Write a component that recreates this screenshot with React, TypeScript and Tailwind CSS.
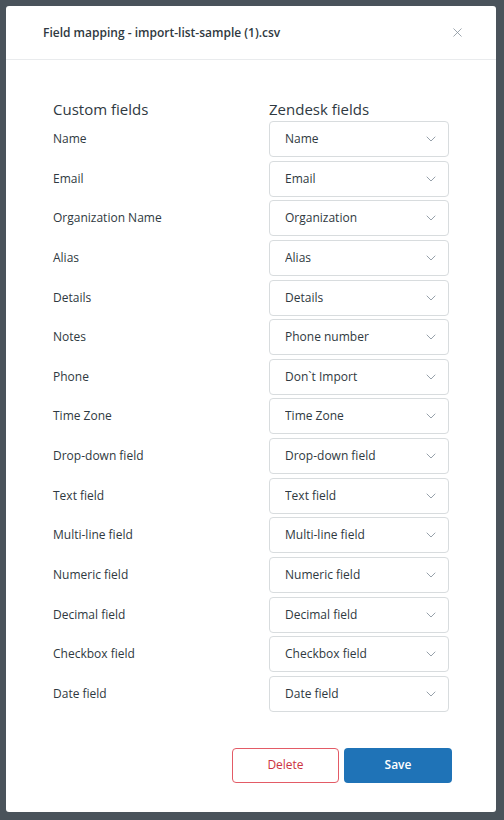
import { ChevronDown, X } from "lucide-react";
import React from "react";

const ROWS: [string, string][] = [
  ["Name", "Name"],
  ["Email", "Email"],
  ["Organization Name", "Organization"],
  ["Alias", "Alias"],
  ["Details", "Details"],
  ["Notes", "Phone number"],
  ["Phone", "Don`t Import"],
  ["Time Zone", "Time Zone"],
  ["Drop-down field", "Drop-down field"],
  ["Text field", "Text field"],
  ["Multi-line field", "Multi-line field"],
  ["Numeric field", "Numeric field"],
  ["Decimal field", "Decimal field"],
  ["Checkbox field", "Checkbox field"],
  ["Date field", "Date field"],
];

export default function App() {
  const [values, setValues] = React.useState(ROWS.map((r) => r[1]));

  return (
    <div
      className="flex min-h-[820px] w-full bg-[#4a535b] p-[6px] pr-[8px] text-[#2f3941]"
      style={{ fontFamily: '"Open Sans", "Noto Sans", sans-serif' }}
    >
      <div className="flex h-[806px] w-[490px] flex-col rounded-[3px] bg-white">
        <div className="flex h-[54px] items-center justify-between border-b border-[#e9ebed] pl-[37px] pr-[31px]">
          <h1 className="text-[12px] font-semibold text-[#2f3941]">
            Field mapping - import-list-sample (1).csv
          </h1>
          <button type="button" className="text-[#87929d]">
            <X className="h-[15px] w-[15px]" strokeWidth={1.3} />
          </button>
        </div>

        <div className="flex flex-1 flex-col pl-[47px] pr-[46px] pt-[39px]">
          <div className="grid grid-cols-[216px_180px] items-center">
            <h2 className="h-[22px] text-[15px] leading-[20px] text-[#2f3941]">
              Custom fields
            </h2>
            <h2 className="h-[22px] text-[15px] leading-[20px] text-[#2f3941]">
              Zendesk fields
            </h2>
          </div>

          <div className="flex flex-col gap-[3.65px]">
            {ROWS.map(([label], i) => (
              <div
                key={label}
                className="grid grid-cols-[216px_180px] items-center"
              >
                <span className="text-[12px] text-[#2f3941]">{label}</span>
                <div className="relative">
                  <select
                    value={values[i]}
                    onChange={(e) =>
                      setValues((prev) =>
                        prev.map((v, j) => (j === i ? e.target.value : v)),
                      )
                    }
                    className="h-[36px] w-full appearance-none rounded-[4px] border border-[#d8dcde] bg-white pl-[15px] pr-8 text-[12px] text-[#2f3941] outline-none"
                  >
                    {Array.from(new Set(ROWS.map((r) => r[1]))).map((o) => (
                      <option key={o} value={o}>
                        {o}
                      </option>
                    ))}
                  </select>
                  <ChevronDown
                    className="pointer-events-none absolute right-[10px] top-1/2 h-4 w-4 -translate-y-1/2 text-[#87929d]"
                    strokeWidth={1.3}
                  />
                </div>
              </div>
            ))}
          </div>

          <div className="-mr-[2px] mt-[36px] flex justify-end gap-[5px]">
            <button
              type="button"
              className="h-[35px] w-[107px] rounded-[4px] border border-[#e35b66] bg-white text-[12px] text-[#cc3340]"
            >
              Delete
            </button>
            <button
              type="button"
              className="h-[35px] w-[108px] rounded-[4px] bg-[#1f73b7] text-[12px] font-semibold text-white"
            >
              Save
            </button>
          </div>
        </div>
      </div>
    </div>
  );
}
